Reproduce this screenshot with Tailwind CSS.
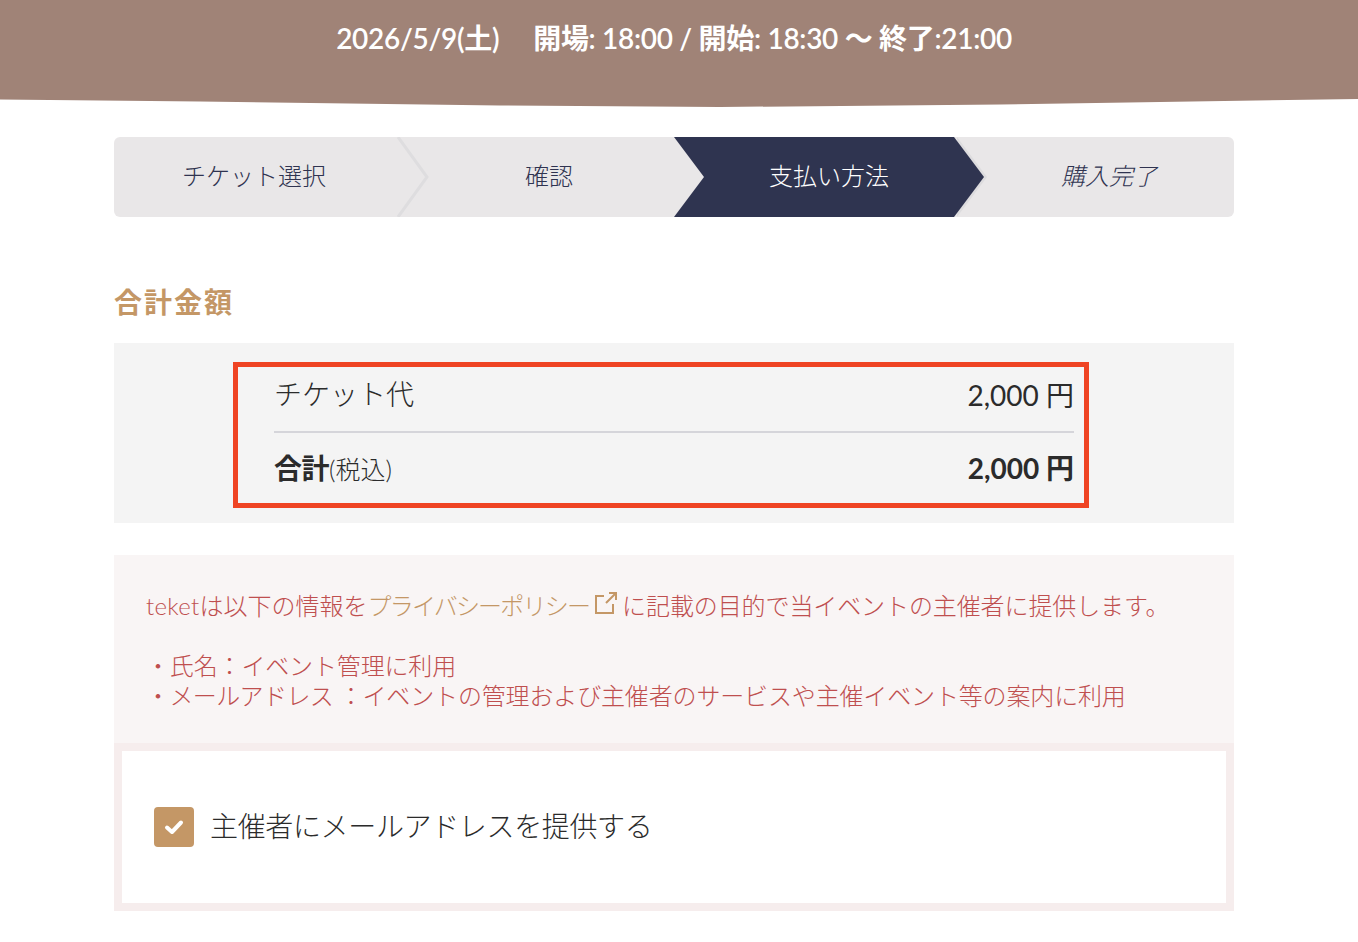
<!DOCTYPE html>
<html lang="ja">
<head>
    <meta charset="UTF-8">
    <meta name="viewport" content="width=device-width, initial-scale=1.0">
    <title>teket</title>
    <script src="https://cdn.jsdelivr.net/npm/@tailwindcss/browser@4"></script>
</head>
<body class="bg-white font-['Lato','Noto_Sans_CJK_JP',sans-serif] text-[#2b2b2b] overflow-hidden h-[942px]">
    <!-- Event date -->
    <header class="relative h-[107px] pt-[19px] text-center text-white text-[28px] leading-[38px] font-semibold tracking-[-0.300px]">
        <svg class="absolute inset-0 -z-10 w-full h-[107px]" viewBox="0 0 1358 107" preserveAspectRatio="none" aria-hidden="true">
            <path fill="#a08377" d="M0 0H1358V99L1000 104.500L720 107L500 105.500L200 101.500L0 99.500Z"></path>
        </svg>
        <p class="pr-[10px]"><span>2026/5/9(土)</span><span class="ml-[34px]">開場: 18:00 / 開始: 18:30 〜 終了:21:00</span></p>
    </header>

    <main class="w-[1120px] ml-[114px]">
        <!-- Steps -->
        <ol class="mt-[30px] grid grid-cols-4 h-[80px] rounded-md bg-[#e9e7e8] text-[24px] pb-[2px] font-light text-[#2f3350]">
            <li class="relative flex items-center justify-center">
                チケット選択
                <svg class="absolute top-0 left-[283px] w-[32px] h-[80px]" viewBox="0 0 32 80" aria-hidden="true">
                    <path fill="none" stroke="#dedddf" stroke-width="3" d="M1 0L30 40L1 80"></path>
                </svg>
            </li>
            <li class="flex items-center justify-center pl-[30px]">確認</li>
            <li class="relative flex items-center justify-center pl-[30px] text-white">
                <svg class="absolute top-0 left-0 w-[313px] h-[80px]" viewBox="0 0 313 80" aria-hidden="true">
                    <path fill="#dddcde" d="M283 0L313 40L283 80Z"></path>
                    <path fill="#2f3450" d="M0 0H280L310 40L280 80H0L30 40Z"></path>
                </svg>
                <span class="relative">支払い方法</span>
            </li>
            <li class="flex items-center justify-center pl-[30px] italic">購入完了</li>
        </ol>

        <!-- Total -->
        <h2 class="mt-[65px] text-[28px] leading-[40px] tracking-[2px] font-bold text-[#c49766]">合計金額</h2>
        <section class="mt-[21px] h-[180px] bg-[#f4f4f4] pt-[19px]">
            <div class="ml-[119px] w-[856px] h-[146px] border-[5px] border-[#ef4423] pl-[36px] pr-[10px] text-[28px]">
                <div class="flex justify-between items-center h-[66px] pb-[8px] border-b-2 border-[#d5d5da] font-light">
                    <span class="-mt-[2px]">チケット代</span>
                    <span class="font-normal">2,000 円</span>
                </div>
                <div class="flex justify-between items-center h-[71px] pb-[2px] font-bold">
                    <span class="tracking-[-0.500px]">合計<span class="text-[25px] font-light tracking-normal">(税込)</span></span>
                    <span>2,000 円</span>
                </div>
            </div>
        </section>

        <!-- Notice -->
        <section class="mt-[32px] h-[188px] bg-[#f9f5f5] pl-[32px] pt-[36px] text-[24px] leading-[30px] font-light text-[#bf4f4f]">
            <p class="flex items-center">
                <span><span class="tracking-[0.300px]">teket</span>は以下の情報を</span><span class="text-[#c49766] tracking-[-1.800px]">プライバシーポリシー</span>
                <svg class="ml-[5px] mr-[4px] -mt-[6px] w-[24px] h-[24px] text-[#c49766]" fill="none" stroke="currentColor" stroke-width="2" viewBox="0 0 24 24" aria-hidden="true">
                    <path d="M10 5H2V22H19V13M12 12L22 2M15 2H22V9"></path>
                </svg>
                <span class="tracking-[-0.100px]">に記載の目的で当イベントの主催者に提供します。</span>
            </p>
            <p class="mt-[30px] tracking-[-0.150px]">・氏名：イベント管理に利用</p>
            <p><span class="tracking-[-0.600px]">・メールアドレス ：</span><span class="tracking-[-0.150px]">イベントの管理および主催者のサービスや主催イベント等の案内に利用</span></p>
        </section>

        <!-- Consent -->
        <label class="flex items-center h-[168px] border-[8px] border-[#f6eded] pl-[32px] pb-[2px] text-[28px] tracking-[-0.350px] font-light">
            <span class="flex items-center justify-center w-[40px] h-[40px] mr-[16px] mt-[2px] rounded bg-[#c49766]">
                <svg class="w-[20px] h-[20px]" fill="none" stroke="#fff" stroke-width="4" stroke-linecap="round" stroke-linejoin="round" viewBox="0 0 20 20" aria-hidden="true">
                    <path d="M3 10.500L8 15L17 5.500"></path>
                </svg>
            </span>
            主催者にメールアドレスを提供する
        </label>
    </main>
</body>
</html>
